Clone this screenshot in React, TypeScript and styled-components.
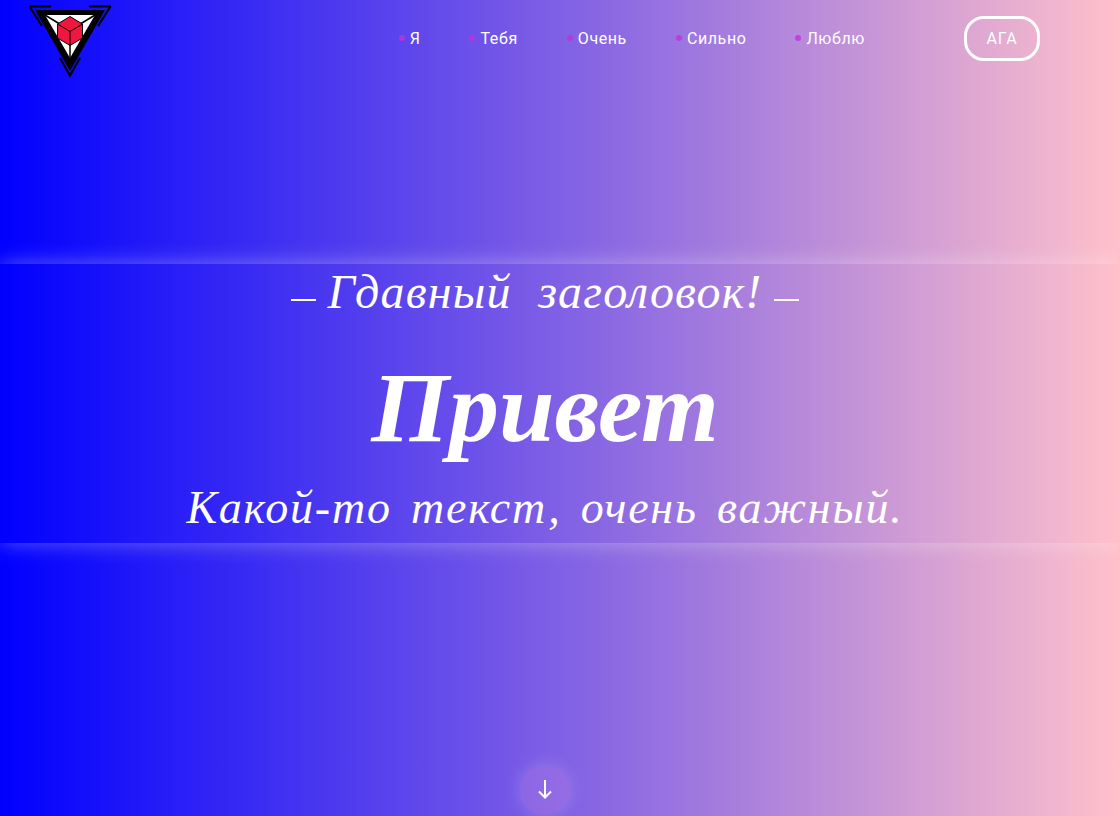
import React from "react";
import styled, { createGlobalStyle } from "styled-components";

const GlobalStyle = createGlobalStyle`
  html, body {
    margin: 0;
    padding: 0;
    overflow: hidden;
  }
  body {
    font-family: "Roboto", "Liberation Sans", sans-serif;
  }
`;

const pageGradient = "linear-gradient(to right, #0000ff 0%, #ffc0cb 100%)";

const Page = styled.div`
  position: relative;
  width: 100%;
  height: 816px;
  overflow: hidden;
  background: ${pageGradient};
  color: #fff;
`;

const Header = styled.header`
  display: flex;
  align-items: flex-start;
  height: 264px;
  box-sizing: border-box;
  padding: 5px 78px 0 28px;
`;

const LogoMark = styled.svg`
  width: 84px;
  height: 73px;
  flex: none;
`;

const Nav = styled.nav`
  display: flex;
  gap: 49px;
  margin-left: auto;
  margin-top: 22px;
`;

const NavItem = styled.a`
  display: flex;
  align-items: center;
  gap: 5px;
  height: 22px;
  font-size: 16px;
  font-weight: 400;
  letter-spacing: 0.6px;
  color: #fff;

  &::before {
    content: "";
    width: 6px;
    height: 6px;
    border-radius: 50%;
    background: rgba(190, 50, 220, 0.8);
  }
`;

const CtaButton = styled.button`
  box-sizing: border-box;
  width: 76px;
  height: 45px;
  margin: 11px 0 0 99px;
  border: 3px solid #fff;
  border-radius: 20px;
  background: transparent;
  color: #fff;
  font-family: inherit;
  font-size: 16px;
  font-weight: 400;
  letter-spacing: 0.9px;
`;

const Hero = styled.section`
  display: flex;
  flex-direction: column;
  align-items: center;
  box-sizing: border-box;
  height: 279px;
  padding-right: 28px;
  background: ${pageGradient};
  box-shadow: 0 0 20px rgba(255, 255, 255, 0.35);
`;

const Eyebrow = styled.h3`
  display: flex;
  align-items: center;
  gap: 11px;
  margin: 0;
  font-family: "Liberation Serif", serif;
  font-style: italic;
  font-weight: 400;
  font-size: 48px;
  line-height: 56px;
  letter-spacing: 1.2px;

  &::before,
  &::after {
    content: "";
    width: 25px;
    height: 2px;
    margin-top: 15px;
    background: #fff;
  }
`;

const Title = styled.h1`
  margin: 26px 0 0;
  font-family: "Liberation Serif", serif;
  font-style: italic;
  font-weight: 700;
  font-size: 100px;
  line-height: 124px;
`;

const Lead = styled.p`
  margin: 10px 0 0;
  font-family: "Liberation Serif", serif;
  font-style: italic;
  font-size: 46px;
  line-height: 56px;
  letter-spacing: 1.8px;
  word-spacing: 6px;
`;

const ScrollButton = styled.a`
  position: absolute;
  left: 520px;
  top: 765px;
  display: flex;
  align-items: center;
  justify-content: center;
  width: 50px;
  height: 50px;
  border-radius: 50%;
  background: rgba(240, 160, 220, 0.18);
  box-shadow: 0 0 18px rgba(255, 255, 255, 0.2);
`;

const Logo = () => (
  <LogoMark viewBox="0 0 84 73">
    <path d="M1 1.500h22M1.500 1.500 14 21" fill="none" stroke="#000" strokeWidth="2.200" />
    <path d="M83 1.500H61M82.500 1.500 70 21" fill="none" stroke="#000" strokeWidth="2.200" />
    <path d="M32 53 42 70.500 52 53" fill="none" stroke="#000" strokeWidth="2.200" />
    <path d="M7 5h70L42 66z" fill="#000" />
    <path d="M17 10h50L42 53z" fill="#fff" />
    <path d="M17 10l18 11M67 10 49 21M42 38v15" stroke="#000" strokeWidth="1.500" />
    <path d="M42 11.500 54.500 19v14L42 40.500 29.500 33V19z" fill="#f0163f" stroke="#000" strokeWidth="1" />
    <path d="M29.500 19 42 26.500 54.500 19M42 26.500v14" fill="none" stroke="#000" strokeWidth="1" />
  </LogoMark>
);

const ArrowDown = () => (
  <svg width="20" height="24" viewBox="0 0 20 24" fill="none" stroke="#fff" strokeWidth="2">
    <path d="M10 2v17M4 13.500l6 6 6-6" />
  </svg>
);

const navLinks = ["Я", "Тебя", "Очень", "Сильно", "Люблю"];

const App = () => (
  <Page>
    <GlobalStyle />
    <Header>
      <Logo />
      <Nav>
        {navLinks.map((link) => (
          <NavItem key={link}>{link}</NavItem>
        ))}
      </Nav>
      <CtaButton>АГА</CtaButton>
    </Header>
    <Hero>
      <Eyebrow>Гдавный &nbsp;заголовок!</Eyebrow>
      <Title>Привет</Title>
      <Lead>Какой-то текст, очень важный.</Lead>
    </Hero>
    <ScrollButton>
      <ArrowDown />
    </ScrollButton>
  </Page>
);

export default App;
